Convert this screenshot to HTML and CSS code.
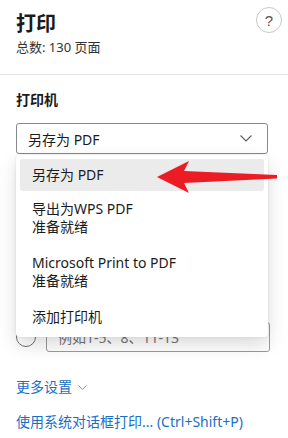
FILE: index.html
```html
<!DOCTYPE html>
<html lang="zh-CN">
<head>
    <meta charset="UTF-8">
    <meta name="viewport" content="width=device-width, initial-scale=1.0">
    <title>打印</title>
    <link rel="stylesheet" href="styles.css">
</head>
<body>
    <!-- 标题栏 -->
    <header class="head">
        <div>
            <h1 class="title">打印</h1>
            <p class="count">总数: 130 页面</p>
        </div>
        <button class="help">?</button>
    </header>

    <section class="panel">
        <h2 class="label">打印机</h2>
        <div class="picker">
            <div class="select">
                <span>另存为 PDF</span>
                <svg class="chev" width="12" height="7" viewBox="0 0 12 7"><path d="M0.5 0.5 L6 6 L11.5 0.5" fill="none" stroke="#5c5c5c" stroke-width="1.1"/></svg>
            </div>
            <!-- 下拉菜单 -->
            <ul class="menu">
                <li class="item active">另存为 PDF</li>
                <li class="item">导出为WPS PDF<span class="state">准备就绪</span></li>
                <li class="item">Microsoft Print to PDF<span class="state">准备就绪</span></li>
                <li class="item">添加打印机</li>
            </ul>
        </div>

        <!-- 页面范围(大部分被菜单遮住) -->
        <div class="row custom"><span class="radio"></span><input class="range" type="text" placeholder="例如1-5、8、11-13"></div>

        <a class="link more" href="#">更多设置
            <svg width="9" height="5" viewBox="0 0 9 5"><path d="M0.5 0.5 L4.5 4.3 L8.5 0.5" fill="none" stroke="#5f9ad8" stroke-width="1"/></svg>
        </a>
        <a class="link sys" href="#">使用系统对话框打印... (Ctrl+Shift+P)</a>
    </section>

    <!-- 红色箭头标注 -->
    <svg class="arrow" width="124" height="36" viewBox="0 0 124 36">
        <path d="M1 17 L33 1 L28 11 L121 15 L121 18.5 L28 23 L33 33 Z" fill="#ec1c24"/>
    </svg>
</body>
</html>
```

FILE: styles.css
```css
/* 基本字体 */
body {
    margin: 0;
    font-family: "Noto Sans", "Noto Sans CJK SC", sans-serif;
    color: #1b1b1b;
    background: #fff;
    position: relative;
}
/* 顶部 */
.head {
    display: flex;
    justify-content: space-between;
    align-items: flex-start;
    height: 74px;
    padding: 0 6px 0 16px;
    border-bottom: 1px solid #e5e5e5;
}
.title {
    margin: 10px 0 0;
    font-size: 20px;
    line-height: 28px;
    font-weight: bold;
}
.count {
    margin: 0;
    font-size: 13px;
    line-height: 18px;
    color: #333;
}
.help {
    margin-top: 7px;
    width: 26px;
    height: 26px;
    border: 1px solid #c8c8c8;
    border-radius: 50%;
    background: #fff;
    color: #555;
    font-family: "Liberation Sans", sans-serif;
    font-size: 15px;
    padding: 0;
}
/* 主区域 */
.panel {
    padding: 15px 20px 0 16px;
}
.label {
    margin: 0;
    font-size: 14px;
    line-height: 20px;
    font-weight: bold;
}
.picker {
    position: relative;
    margin-top: 13px;
}
.select {
    display: flex;
    justify-content: space-between;
    align-items: center;
    height: 29px;
    padding: 0 15px 0 11px;
    border: 1px solid #8a8a8a;
    border-radius: 3px;
    font-size: 14px;
}
/* 下拉列表 */
.menu {
    position: absolute;
    top: 32px;
    left: 0;
    right: 0;
    margin: 0;
    padding: 4px 4px 2px;
    list-style: none;
    background: #fff;
    border-radius: 4px;
    box-shadow: 0 8px 18px rgba(0, 0, 0, 0.14), 0 0 3px rgba(0, 0, 0, 0.1);
    z-index: 2;
}
.item {
    padding: 9px 12px;
    font-size: 14px;
    line-height: 18px;
}
.item.active {
    padding: 7px 12px;
    background: #ebebeb;
    border-radius: 3px;
}
.state {
    display: block;
}
/* 页面范围 */
.row {
    display: flex;
    align-items: center;
    gap: 10px;
    height: 30px;
    font-size: 14px;
}
.custom {
    margin-top: 168px;
}
.radio {
    flex: none;
    width: 18px;
    height: 18px;
    border: 1px solid #6e6e6e;
    border-radius: 50%;
}
.range {
    flex: 1;
    height: 30px;
    box-sizing: border-box;
    border: 1px solid #9a9a9a;
    border-radius: 3px;
    padding: 0 11px;
    font-family: "Noto Sans", "Noto Sans CJK SC", sans-serif;
    font-size: 14px;
}
/* 链接 */
.link {
    display: flex;
    align-items: center;
    gap: 6px;
    color: #1a6fc4;
    text-decoration: none;
    font-size: 14px;
    line-height: 20px;
}
.more {
    margin-top: 25px;
}
.sys {
    margin-top: 15px;
}
/* 标注箭头 */
.arrow {
    position: absolute;
    left: 156px;
    top: 160px;
    z-index: 3;
}
```
